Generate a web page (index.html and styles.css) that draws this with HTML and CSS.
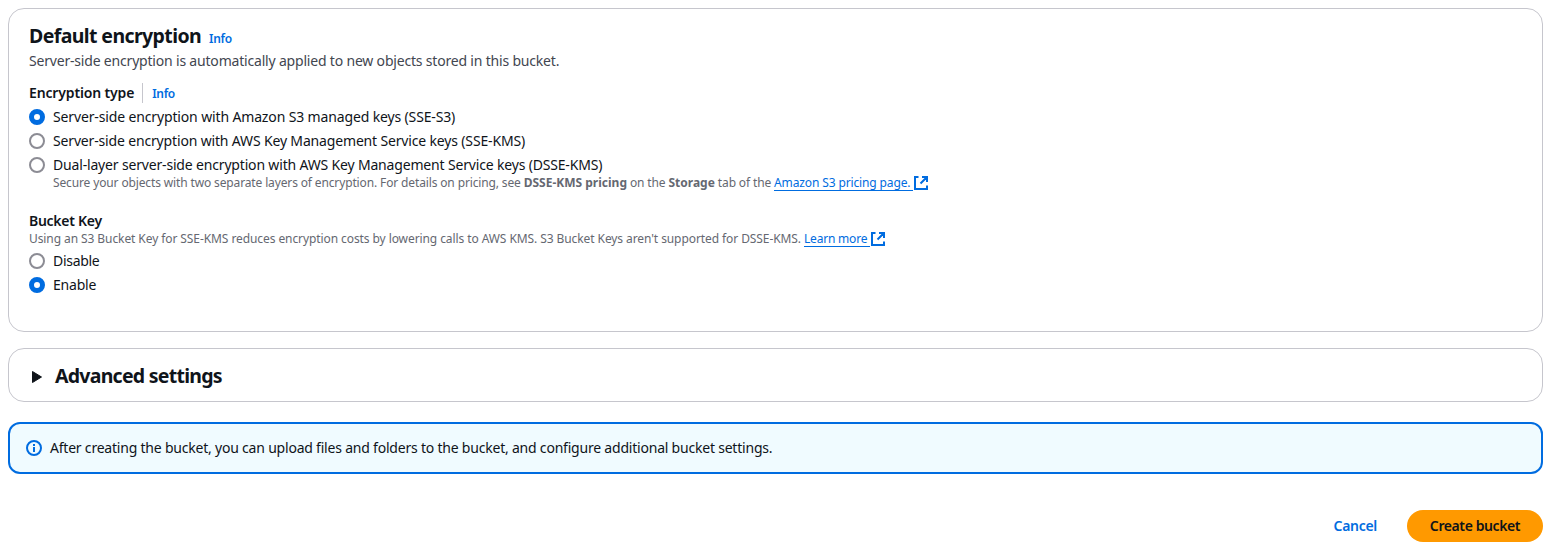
FILE: index.html
```html
<!DOCTYPE html>
<html lang="en">
<head>
<meta charset="utf-8">
<title>Create bucket</title>
<link rel="stylesheet" href="styles.css">
</head>
<body>
<main class="page">
  <section class="card encryption">
    <header class="card-header">
      <h2 class="heading"><span class="t-title">Default encryption</span></h2>
      <a class="info">Info</a>
    </header>
    <p class="description"><span class="t-desc">Server-side encryption is automatically applied to new objects stored in this bucket.</span></p>

    <div class="field">
      <div class="label-row">
        <span class="label t-type">Encryption type</span>
        <a class="info divided">Info</a>
      </div>
      <div class="options">
        <label class="option"><span class="radio checked"></span><span class="t-o1">Server-side encryption with Amazon S3 managed keys (SSE-S3)</span></label>
        <label class="option"><span class="radio"></span><span class="t-o2">Server-side encryption with AWS Key Management Service keys (SSE-KMS)</span></label>
        <label class="option"><span class="radio"></span><span class="t-o3">Dual-layer server-side encryption with AWS Key Management Service keys (DSSE-KMS)</span></label>
      </div>
      <div class="hint indented"><span class="t-h1">Secure your objects with two separate layers of encryption. For details on pricing, see <b>DSSE-KMS pricing</b> on the <b>Storage</b> tab of the&nbsp;</span><a class="link t-l1">Amazon S3 pricing page.</a><svg class="external" viewBox="0 0 14 14"><path d="M4.500 1H1v12h12V9.500M8 1h5v5M13 1L6.500 7.500"/></svg></div>
    </div>

    <div class="field bucket-key">
      <div class="label-row"><span class="label t-key">Bucket Key</span></div>
      <div class="hint"><span class="t-h2">Using an S3 Bucket Key for SSE-KMS reduces encryption costs by lowering calls to AWS KMS. S3 Bucket Keys aren't supported for DSSE-KMS.&nbsp;</span><a class="link t-l2">Learn more</a><svg class="external" viewBox="0 0 14 14"><path d="M4.500 1H1v12h12V9.500M8 1h5v5M13 1L6.500 7.500"/></svg></div>
      <div class="options">
        <label class="option"><span class="radio"></span><span class="t-o4">Disable</span></label>
        <label class="option"><span class="radio checked"></span><span class="t-o5">Enable</span></label>
      </div>
    </div>
  </section>

  <section class="card advanced">
    <svg class="caret" viewBox="0 0 10 12"><path d="M.5 .5L9.5 6L.5 11.500z"/></svg>
    <h2 class="heading"><span class="t-adv">Advanced settings</span></h2>
  </section>

  <div class="alert">
    <svg class="alert-icon" viewBox="0 0 16 16"><circle cx="8" cy="8" r="7"/><path d="M8 4v2M8 7v5"/></svg>
    <span class="t-alert">After creating the bucket, you can upload files and folders to the bucket, and configure additional bucket settings.</span>
  </div>

  <footer class="actions">
    <button class="btn btn-link"><span class="t-cancel">Cancel</span></button>
    <button class="btn btn-primary"><span class="t-create">Create bucket</span></button>
  </footer>
</main>
</body>
</html>
```
FILE: styles.css
```css
* { box-sizing: border-box; }
body {
  margin: 0;
  background: #fff;
  color: #0f141a;
  font: 14px/20px "Noto Sans", "Open Sans", sans-serif;
}
.page { padding: 8px 11px 0 8px; }
.card { border: 1px solid #c6c6cd; border-radius: 16px; background: #fff; }
.encryption { height: 324px; padding: 15px 20px 0; }
.card-header { display: flex; align-items: baseline; gap: 8px; height: 24px; }
.heading { margin: 0; font-size: 19.5px; line-height: 24px; font-weight: 700; }
.description { margin: 3px 0 0; color: #424650; }
.info { color: #006ce0; font-size: 12px; line-height: 20px; font-weight: 600; letter-spacing: -0.3px; }
.field { margin-top: 12px; }
.bucket-key { margin-top: 20px; }
.label-row { display: flex; height: 20px; }
.label { font-weight: 600; }
.divided { height: 20px; margin-left: 8px; padding: 1px 0 0 9px; border-left: 1px solid #c6c6cd; }
.options { display: grid; gap: 4px; padding-top: 4px; }
.option { display: flex; align-items: center; gap: 8px; height: 20px; }
.radio { width: 16px; height: 16px; border: 2px solid #8c8c94; border-radius: 50%; background: #fff; }
.radio.checked { border: 5px solid #006ce0; }
.hint { display: flex; height: 16px; color: #656871; font-size: 12px; line-height: 16px; white-space: pre; }
.hint b { letter-spacing: 0; }
.indented { padding-left: 24px; }
.link { height: 16px; padding-right: 3px; border-bottom: 1px solid #006ce0; color: #006ce0; }
.external { width: 14px; height: 14px; margin: 1px 0 0 1px; fill: none; stroke: #006ce0; stroke-width: 2; }
.advanced { display: flex; align-items: center; gap: 13px; height: 54px; margin-top: 16px; padding: 2px 23px 0; }
.caret { width: 10px; height: 12px; margin-top: 2px; fill: #0f141a; stroke: #0f141a; stroke-linejoin: round; }
.alert { display: flex; align-items: center; gap: 8px; height: 52px; margin-top: 20px; padding: 0 16px; border: 2px solid #006ce0; border-radius: 12px; background: #f0fbff; }
.alert-icon { width: 16px; height: 16px; fill: none; stroke: #006ce0; stroke-width: 2; }
.actions { display: flex; justify-content: flex-end; gap: 8px; margin-top: 36px; }
.btn { height: 32px; padding: 0 22px; border: 0; border-radius: 16px; font: 600 14px/20px "Noto Sans", "Open Sans", sans-serif; white-space: nowrap; }
.btn-link { background: none; color: #006ce0; }
.btn-primary { width: 136px; background: #ff9900; color: #0f141a; }

/* Per-string tracking */
.t-title { letter-spacing: -0.6px; }
.t-adv { letter-spacing: -0.74px; }
.t-desc { letter-spacing: -0.19px; }
.t-type { letter-spacing: -0.15px; }
.t-key { letter-spacing: -0.28px; }
.t-o1 { letter-spacing: -0.14px; }
.t-o2 { letter-spacing: -0.16px; }
.t-o3 { letter-spacing: -0.17px; }
.t-o4 { letter-spacing: -0.3px; }
.t-o5 { letter-spacing: -0.2px; }
.t-h1 { letter-spacing: -0.136px; }
.t-l1 { letter-spacing: -0.13px; }
.t-h2 { letter-spacing: -0.085px; }
.t-l2 { letter-spacing: -0.2px; }
.t-alert { letter-spacing: -0.21px; }
.t-cancel { letter-spacing: -0.3px; }
.t-create { letter-spacing: -0.4px; }
```
